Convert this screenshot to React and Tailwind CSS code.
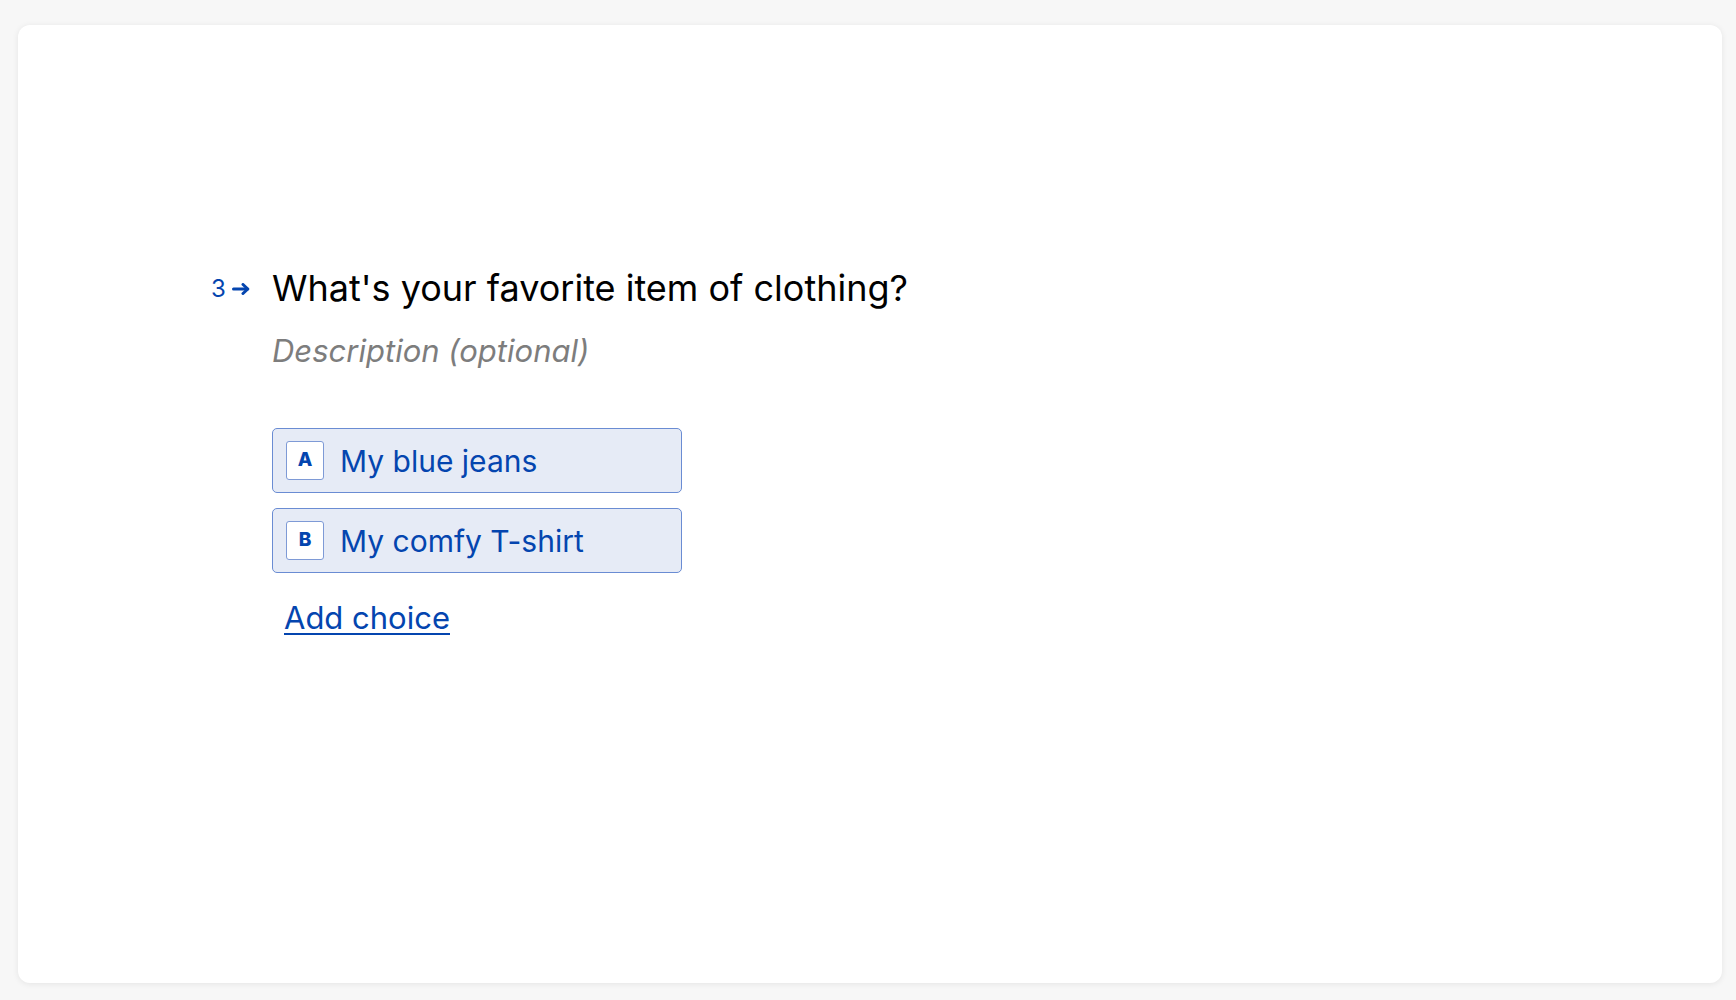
// Typeform-style question builder card: multiple choice question preview.
const CHOICES = [
  { key: 'A', label: 'My blue jeans' },
  { key: 'B', label: 'My comfy T-shirt' },
];

function ArrowIcon() {
  return (
    <svg width="18" height="12" viewBox="0 0 18 12" fill="none" stroke="currentColor" strokeWidth="3" strokeLinecap="round" strokeLinejoin="round">
      <path d="M1.5 6H15.5" />
      <path d="M11 1.5L15.8 6 11 10.5" />
    </svg>
  );
}

function Choice({ letter, label }) {
  return (
    <div className="flex items-center h-[65px] w-[410px] rounded-[5px] border border-[#6a8cd3] bg-[#e6ebf6] pl-[13px]">
      <span className="flex items-center justify-center w-[38px] h-[39px] rounded-[3px] border border-[#7e9ad6] bg-white text-[19px] font-extrabold text-[#0445af]">
        {letter}
      </span>
      <span className="ml-4 text-[30px] leading-9 text-[#0445af]">{label}</span>
    </div>
  );
}

export default function App() {
  return (
    <div className="h-screen bg-[#f7f7f7] pt-[25px] pl-[18px] pr-[14px] pb-[17px] font-['Inter',sans-serif]">
      <div className="h-full rounded-xl bg-white shadow-[0_1px_6px_rgba(0,0,0,0.08)] pt-[241px] pl-[193px]">
        <div className="flex items-start">
          <div className="flex items-center w-[61px] h-11 text-[#0445af]">
            <span className="text-[24px] leading-11 mt-[2px]">3</span>
            <span className="ml-[6px] mt-[1px]"><ArrowIcon /></span>
          </div>
          <div className="flex flex-col">
            <h1 className="text-[36px] leading-11 text-black">What's your favorite item of clothing?</h1>
            <p className="mt-[23px] text-[31px] leading-9 italic text-[#7d7d7d]">Description (optional)</p>
            <div className="mt-[59px] flex flex-col gap-[15px]">
              {CHOICES.map((c) => (
                <Choice key={c.key} letter={c.key} label={c.label} />
              ))}
            </div>
            <a href="#" className="mt-[27px] ml-3 self-start text-[31px] leading-9 text-[#0445af] underline underline-offset-4 decoration-2">
              Add choice
            </a>
          </div>
        </div>
      </div>
    </div>
  );
}
